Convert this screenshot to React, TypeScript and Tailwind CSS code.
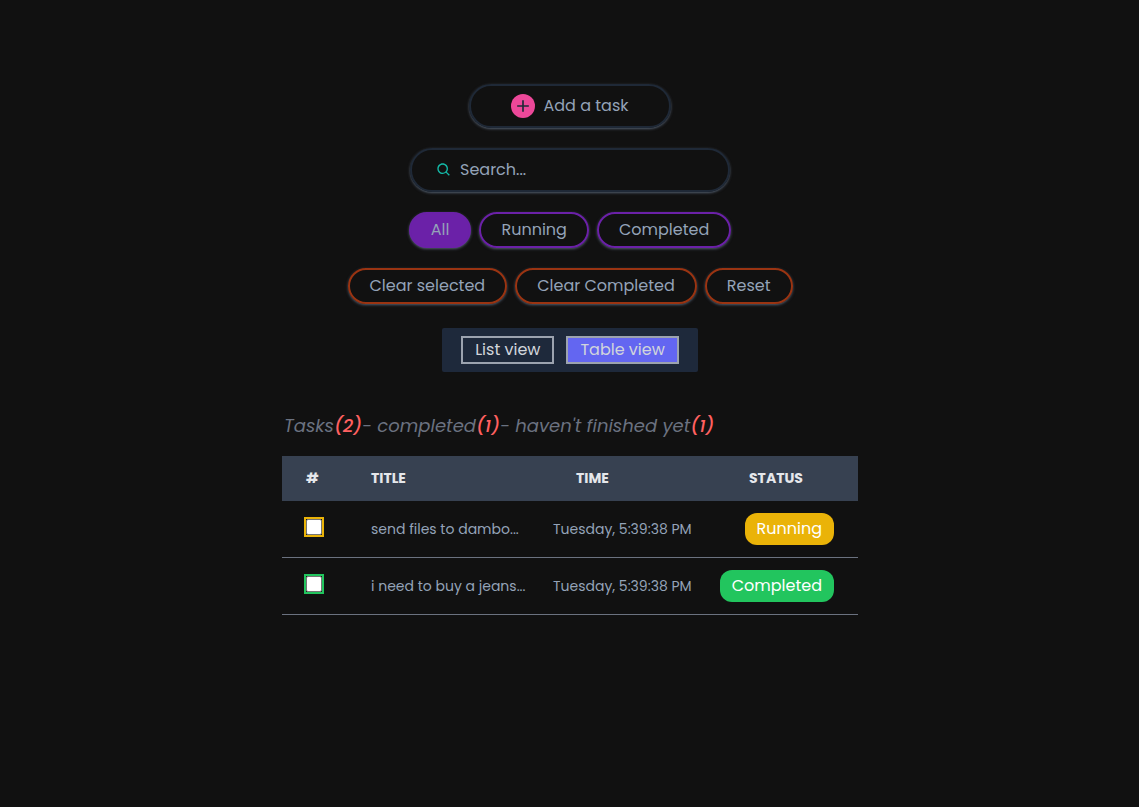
import { useState } from "react";
import { BiPlus, BiSearch } from "react-icons/bi";

type Status = "Running" | "Completed";

const tasks: { id: number; title: string; time: string; status: Status }[] = [
  { id: 1, title: "send files to dambo...", time: "Tuesday, 5:39:38 PM", status: "Running" },
  { id: 2, title: "i need to buy a jeans...", time: "Tuesday, 5:39:38 PM", status: "Completed" },
];

const filters = ["All", "Running", "Completed"];
const actions = ["Clear selected", "Clear Completed", "Reset"];
const views = ["List view", "Table view"];

const pill = "flex h-9 items-center justify-center rounded-full border-2 px-5 pb-px shadow shadow-[#4b5563]";

function Count({ value }: { value: number }) {
  return <span className="font-medium text-[#ff6060]">({value})</span>;
}

export default function App() {
  const [filter, setFilter] = useState("All");
  const [view, setView] = useState("Table view");

  return (
    <main className="flex min-h-screen flex-col items-center bg-[#111111] pt-21 pl-px font-['Poppins','Inter',sans-serif] text-base text-[#94a3b8]">
      <button className="flex h-11 items-center justify-center gap-2 rounded-full border-2 border-[#1f2937] px-10 pb-px shadow shadow-[#4b5563]">
        <span className="flex size-6 items-center justify-center rounded-full bg-[#ec4899] text-[#1f2937]">
          <BiPlus className="size-5" />
        </span>
        Add a task
      </button>

      <label className="mt-5 flex h-11 w-80 items-center gap-2 rounded-full border-2 border-[#1f2937] px-6 pb-px shadow shadow-[#4b5563]">
        <BiSearch className="size-4 shrink-0 text-[#14b8a6]" />
        <input
          type="text"
          aria-label="Search"
          placeholder="Search..."
          className="w-full bg-transparent outline-none placeholder:text-[#94a3b8]"
        />
      </label>

      <div className="mt-5 flex gap-2">
        {filters.map((label) => (
          <button
            key={label}
            onClick={() => setFilter(label)}
            className={`${pill} border-[#6b21a8] ${filter === label ? "bg-[#6b21a8]" : ""}`}
          >
            {label}
          </button>
        ))}
      </div>

      <div className="mt-5 flex gap-2">
        {actions.map((label) => (
          <button key={label} className={`${pill} border-[#9a3412]`}>
            {label}
          </button>
        ))}
      </div>

      <div className="mt-6 flex h-11 w-64 items-center justify-center gap-3 rounded-xs bg-[#1e293b] text-[#d1d5db]">
        {views.map((label) => (
          <button
            key={label}
            onClick={() => setView(label)}
            className={`flex h-7 items-center justify-center border-2 border-[#9ca3af] px-3 pb-px ${view === label ? "bg-[#6366f1]" : ""}`}
          >
            {label}
          </button>
        ))}
      </div>

      <section className="mt-10 w-full max-w-xl">
        <h1 className="pl-0.5 text-lg text-[#6b7280] italic">
          Tasks
          <Count value={2} />- completed
          <Count value={1} />- haven't finished yet
          <Count value={1} />
        </h1>

        <table className="mt-4 w-full table-fixed border-separate border-spacing-0 text-left text-sm">
          <thead className="bg-[#374151] text-[#e5e7eb] uppercase">
            <tr className="h-[45px]">
              <th className="w-[65px] px-6 pb-0.5 font-bold">#</th>
              <th className="w-[205px] px-6 pb-0.5 font-bold">Title</th>
              <th className="w-[173px] px-6 pb-0.5 font-bold">Time</th>
              <th className="px-6 pb-0.5 font-bold">Status</th>
            </tr>
          </thead>
          <tbody>
            {tasks.map(({ id, title, time, status }) => (
              <tr key={id} className="h-[57px] *:border-b *:border-[#6b7280]">
                <td className="pb-1 pl-[22px]">
                  <label
                    className={`flex size-5 border-2 ${status === "Running" ? "border-[#eab308]" : "border-[#22c55e]"}`}
                  >
                    <input
                      type="checkbox"
                      aria-label={title}
                      className="size-4 appearance-none rounded-xs border border-[#767676] bg-white checked:bg-[#6366f1]"
                    />
                  </label>
                </td>
                <td className="pl-6 whitespace-nowrap">{title}</td>
                <td className="pl-px whitespace-nowrap">{time}</td>
                <td className="pr-6">
                  <div className="flex justify-end">
                    <span
                      className={`flex h-8 shrink-0 items-center rounded-xl px-3 pb-px text-base text-white ${status === "Running" ? "bg-[#eab308]" : "bg-[#22c55e]"}`}
                    >
                      {status}
                    </span>
                  </div>
                </td>
              </tr>
            ))}
          </tbody>
        </table>
      </section>
    </main>
  );
}
